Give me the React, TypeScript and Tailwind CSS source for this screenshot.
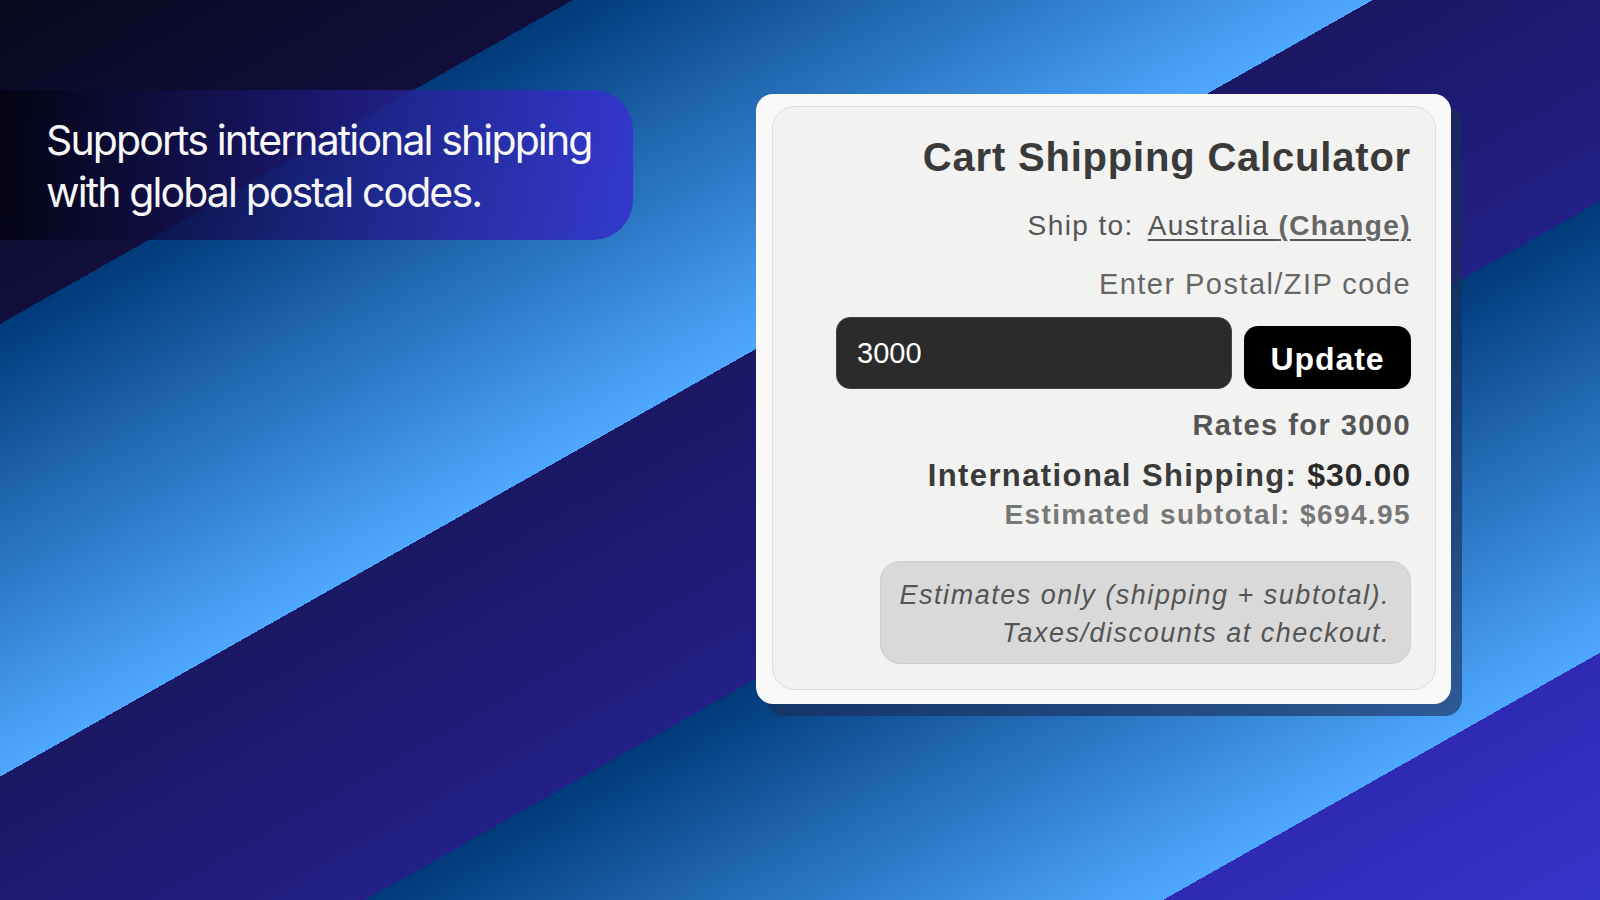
export default function App() {
  return (
    <div className="w-[1600px] h-[900px] overflow-hidden flex items-start bg-[linear-gradient(150.5deg,#09091f_0px,#120f3c_282px,#003a7a_282px,#4fa8ff_676px,#1a1763_676px,#221f86_963px,#003a7a_963px,#4fa8ff_1356px,#2e2ab4_1356px,#3535c8_100%)]">
      {/* Feature banner */}
      <div className="mt-[90px] w-[633px] h-[150px] rounded-r-[40px] pl-[46px] pt-[24px] bg-[linear-gradient(90deg,rgba(2,2,14,0.8),rgba(28,26,120,0.8)_50%,rgba(52,52,205,0.93))]">
        <p className="font-['Inter',sans-serif] text-[41px] leading-[52px] tracking-[-0.046em] text-[#f7f7f7]">
          Supports international shipping
          <br />
          with global postal codes.
        </p>
      </div>

      {/* Calculator card */}
      <div className="ml-[123px] mt-[94px] w-[695px] h-[610px] rounded-[17px] bg-[#f9f9f7] p-[12px] pl-[16px] pr-[15px] shadow-[11px_12px_0_rgba(28,45,85,0.62)]">
        <div className="h-[584px] rounded-[23px] border border-[#dcdcda] bg-[#f2f2f1] pt-[27px] pr-[24px] flex flex-col items-end text-right font-['Liberation_Sans',Arial,sans-serif]">
          <h2 className="text-[40px] leading-[47px] font-bold tracking-[0.02em] text-[#3a3a3a]">
            Cart Shipping Calculator
          </h2>

          <div className="mt-[28px] text-[28px] leading-[34px] tracking-[0.05em] text-[#555]">
            <span>Ship to:</span>
            <span className="ml-[14px] underline underline-offset-[4px] decoration-[2px]">
              Australia <b className="text-[#666]">(Change)</b>
            </span>
          </div>

          <div className="mt-[24px] text-[29px] leading-[35px] tracking-[0.05em] text-[#666]">
            Enter Postal/ZIP code
          </div>

          <div className="mt-[15px] flex items-end gap-[12px]">
            <input
              readOnly
              value="3000"
              className="w-[396px] h-[72px] rounded-[14px] border border-[#444] bg-[#2b2b2b] pl-[20px] text-[29px] text-white font-['Liberation_Sans',Arial,sans-serif] outline-none"
            />
            <button className="w-[167px] h-[63px] rounded-[14px] bg-black pt-[3px] text-white text-[32px] font-bold tracking-[0.03em]">
              Update
            </button>
          </div>

          <div className="mt-[19px] text-[29px] leading-[35px] font-bold tracking-[0.05em] text-[#555]">
            Rates for 3000
          </div>

          <div className="mt-[14px] text-[31px] leading-[37px] font-bold tracking-[0.045em] text-[#3a3a3a]">
            International Shipping: <span className="text-[32px] text-[#2a2a2a] tracking-[0.03em]">$30.00</span>
          </div>

          <div className="mt-[4px] text-[28px] leading-[34px] font-bold tracking-[0.05em] text-[#777]">
            Estimated subtotal: $694.95
          </div>

          <div className="mt-[29px] w-[531px] rounded-[20px] border border-[#cdcdcd] bg-[#d9d9d9] pt-[14px] pb-[11px] pr-[20px] text-[27px] leading-[38px] italic tracking-[0.056em] text-[#555]">
            Estimates only (shipping + subtotal).
            <br />
            Taxes/discounts at checkout.
          </div>
        </div>
      </div>
    </div>
  );
}
